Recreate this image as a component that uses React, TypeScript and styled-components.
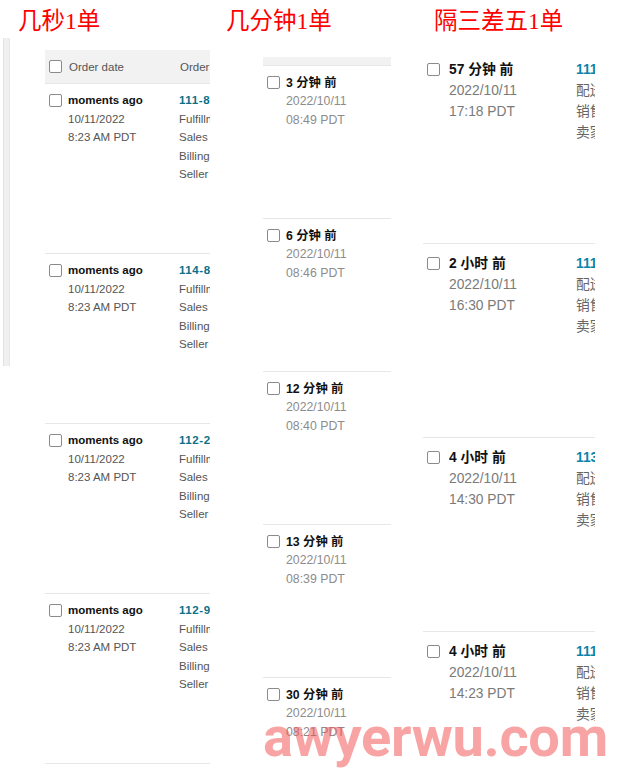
import React from "react";
import styled, { createGlobalStyle } from "styled-components";

const Global = createGlobalStyle`
  html, body { margin: 0; padding: 0; background: #fff; }
  body { overflow: hidden; }
`;

const Page = styled.div`
  position: relative;
  width: 624px;
  height: 773px;
  overflow: hidden;
  display: flex;
  align-items: flex-start;
  background: #fff;
`;

const Panel = styled.section<{ $left: number; $width: number }>`
  margin-left: ${(p) => p.$left}px;
  width: ${(p) => p.$width}px;
  flex: none;
  display: flex;
  flex-direction: column;
`;

const Title = styled.h2<{ $indent: number }>`
  margin: 0;
  padding-left: ${(p) => p.$indent}px;
  height: 38px;
  line-height: 43px;
  font-family: "Liberation Serif", "Noto Sans CJK SC", serif;
  font-weight: 400;
  font-size: 23.5px;
  color: #ff0000;
  white-space: nowrap;
`;

const LeftBody = styled.div`
  display: flex;
  align-items: flex-start;
`;

const Strip = styled.div`
  margin-left: 3px;
  width: 7px;
  height: 328px;
  flex: none;
  box-sizing: border-box;
  background: #f0f0f0;
  border-left: 1px solid #e2e2e2;
  border-right: 1px solid #e6e6e6;
`;

const Table = styled.div<{ $left: number; $top: number }>`
  margin-left: ${(p) => p.$left}px;
  margin-top: ${(p) => p.$top}px;
  flex: 1;
  min-width: 0;
  overflow: hidden;
`;

const HeaderBar = styled.div<{ $h: number }>`
  height: ${(p) => p.$h}px;
  box-sizing: border-box;
  background: #f2f2f2;
  display: flex;
  align-items: center;
  padding-left: 4px;
  gap: 7px;
  font-family: "Liberation Sans", Arial, sans-serif;
  font-size: 11.5px;
  color: #555;
  white-space: nowrap;
`;

const HeadLabel = styled.span<{ $w?: number }>`
  width: ${(p) => (p.$w ? `${p.$w}px` : "auto")};
  flex: none;
`;

const Row = styled.div<{ $h: number; $cols: string; $pad: number; $lh: number; $fs: number; $noBorder?: boolean }>`
  height: ${(p) => p.$h}px;
  box-sizing: border-box;
  border-top: 1px solid ${(p) => (p.$noBorder ? "transparent" : "#e7e7e7")};
  padding-top: ${(p) => p.$pad}px;
  padding-left: 4px;
  display: grid;
  grid-template-columns: ${(p) => p.$cols};
  align-items: start;
  line-height: ${(p) => p.$lh}px;
  font-size: ${(p) => p.$fs}px;
  font-family: "Liberation Sans", Arial, "Noto Sans CJK SC", sans-serif;
  white-space: nowrap;
`;

const Check = styled.span<{ $size: number; $lh: number }>`
  display: block;
  flex: none;
  width: ${(p) => p.$size}px;
  height: ${(p) => p.$size}px;
  box-sizing: border-box;
  border: 1.3px solid #8a8a8a;
  border-radius: 2px;
  margin-top: ${(p) => (p.$lh - p.$size) / 2}px;
  background: #fff;
`;

const Cell = styled.div`
  display: flex;
  flex-direction: column;
  overflow: hidden;
`;

const Strong = styled.span`
  font-weight: 700;
  color: #111;
`;

const Muted = styled.span<{ $c: string }>`
  color: ${(p) => p.$c};
`;

const Link = styled.span<{ $c: string; $ls?: number }>`
  font-weight: 700;
  letter-spacing: ${(p) => p.$ls ?? 0}px;
  color: ${(p) => p.$c};
`;

const Watermark = styled.div`
  position: absolute;
  left: 263px;
  top: 709px;
  font-family: Roboto, "Liberation Sans", sans-serif;
  font-weight: 700;
  font-size: 56px;
  line-height: 56px;
  letter-spacing: -0.3px;
  color: rgba(242, 80, 80, 0.52);
  white-space: nowrap;
  pointer-events: none;
`;

const leftRows = ["111-8", "114-8", "112-2", "112-9", "113-4"];
const midRows = [
  ["3 分钟 前", "08:49 PDT"],
  ["6 分钟 前", "08:46 PDT"],
  ["12 分钟 前", "08:40 PDT"],
  ["13 分钟 前", "08:39 PDT"],
  ["30 分钟 前", "08:21 PDT"],
];
const rightRows = [
  ["57 分钟 前", "17:18 PDT", "111"],
  ["2 小时 前", "16:30 PDT", "111"],
  ["4 小时 前", "14:30 PDT", "113"],
  ["4 小时 前", "14:23 PDT", "111"],
];

export default function App() {
  return (
    <Page>
      <Global />
      <Panel $left={0} $width={210}>
        <Title $indent={18}>几秒1单</Title>
        <LeftBody>
          <Strip />
          <Table $left={35} $top={12}>
            <HeaderBar $h={33}>
              <Check $size={13} $lh={13} />
              <HeadLabel $w={104}>Order date</HeadLabel>
              <HeadLabel>Order details</HeadLabel>
            </HeaderBar>
            {leftRows.map((id) => (
              <Row key={id} $h={170} $cols="19px 111px 1fr" $pad={7} $lh={18.5} $fs={11.5}>
                <Check $size={13} $lh={18.5} />
                <Cell>
                  <Strong>moments ago</Strong>
                  <Muted $c="#555">10/11/2022</Muted>
                  <Muted $c="#555">8:23 AM PDT</Muted>
                </Cell>
                <Cell>
                  <Link $c="#0a7186" $ls={0.6}>{id}654321-7654321</Link>
                  <Muted $c="#555">Fulfillment method: Seller</Muted>
                  <Muted $c="#555">Sales channel: Amazon.com</Muted>
                  <Muted $c="#555">Billing country/region: US</Muted>
                  <Muted $c="#555">Seller order ID: {id}</Muted>
                </Cell>
              </Row>
            ))}
          </Table>
        </LeftBody>
      </Panel>

      <Panel $left={16} $width={165}>
        <Title $indent={0}>几分钟1单</Title>
        <Table $left={37} $top={19}>
          <HeaderBar $h={8} />
          {midRows.map(([ago, time]) => (
            <Row key={ago} $h={153} $cols="19px 1fr" $pad={7.5} $lh={18.5} $fs={12.3}>
              <Check $size={13} $lh={18.5} />
              <Cell>
                <Strong>{ago}</Strong>
                <Muted $c="#8c8c8c">2022/10/11</Muted>
                <Muted $c="#8c8c8c">{time}</Muted>
              </Cell>
            </Row>
          ))}
        </Table>
      </Panel>

      <Panel $left={32} $width={172}>
        <Title $indent={11}>隔三差五1单</Title>
        <Table $left={0} $top={11}>
          {rightRows.map(([ago, time, id], i) => (
            <Row
              key={i}
              $h={194}
              $cols="22px 127px 1fr"
              $pad={9}
              $lh={21}
              $fs={13.8}
              $noBorder={i === 0}
            >
              <Check $size={13} $lh={21} />
              <Cell>
                <Strong>{ago}</Strong>
                <Muted $c="#7a7a7a">2022/10/11</Muted>
                <Muted $c="#7a7a7a">{time}</Muted>
              </Cell>
              <Cell>
                <Link $c="#0b84ab">{id}-1234567-7654321</Link>
                <Muted $c="#666">配送渠道：卖家</Muted>
                <Muted $c="#666">销售渠道：Amazon.com</Muted>
                <Muted $c="#666">卖家订单编号：{id}</Muted>
              </Cell>
            </Row>
          ))}
        </Table>
      </Panel>

      <Watermark>awyerwu.com</Watermark>
    </Page>
  );
}
